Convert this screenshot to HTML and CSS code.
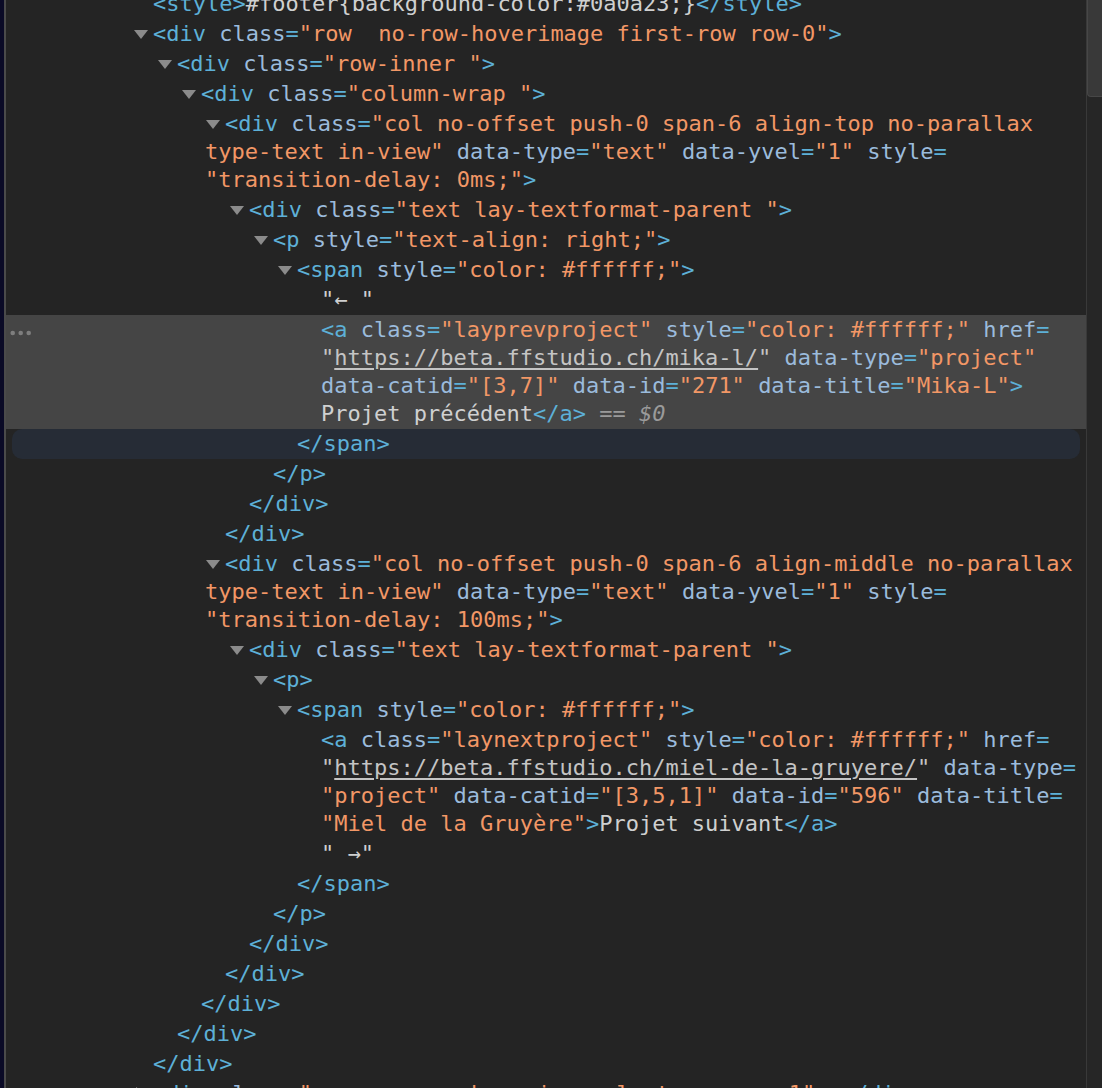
FILE: index.html
```html
<!DOCTYPE html>
<html>
<head>
<meta charset="utf-8">
<link rel="stylesheet" href="styles.css">
</head>
<body>
<div class="frame">
  <div class="edge"></div>
  <div class="panel">
    <div class="tree">
      <div class="node l0"><span class="t">&lt;style&gt;</span>#footer{background-color:#0a0a23;}<span class="t">&lt;/style&gt;</span></div>
      <div class="node d0"><svg class="tri" width="20" height="28" viewBox="0 0 20 28"><path d="M1 10 H15 L8 19 Z"/></svg><span class="t">&lt;div</span> <span class="an">class</span><span class="t">=</span><span class="av">"row  no-row-hoverimage first-row row-0"</span><span class="t">&gt;</span></div>
      <div class="node d1"><svg class="tri" width="20" height="28" viewBox="0 0 20 28"><path d="M1 10 H15 L8 19 Z"/></svg><span class="t">&lt;div</span> <span class="an">class</span><span class="t">=</span><span class="av">"row-inner "</span><span class="t">&gt;</span></div>
      <div class="node d2"><svg class="tri" width="20" height="28" viewBox="0 0 20 28"><path d="M1 10 H15 L8 19 Z"/></svg><span class="t">&lt;div</span> <span class="an">class</span><span class="t">=</span><span class="av">"column-wrap "</span><span class="t">&gt;</span></div>
      <div class="node d3"><svg class="tri" width="20" height="28" viewBox="0 0 20 28"><path d="M1 10 H15 L8 19 Z"/></svg><span class="t">&lt;div</span> <span class="an">class</span><span class="t">=</span><span class="av">"col no-offset push-0 span-6 align-top no-parallax<br>type-text in-view"</span> <span class="an">data-type</span><span class="t">=</span><span class="av">"text"</span> <span class="an">data-yvel</span><span class="t">=</span><span class="av">"1"</span> <span class="an">style</span><span class="t">=</span><br><span class="av">"transition-delay: 0ms;"</span><span class="t">&gt;</span></div>
      <div class="node d4"><svg class="tri" width="20" height="28" viewBox="0 0 20 28"><path d="M1 10 H15 L8 19 Z"/></svg><span class="t">&lt;div</span> <span class="an">class</span><span class="t">=</span><span class="av">"text lay-textformat-parent "</span><span class="t">&gt;</span></div>
      <div class="node d5"><svg class="tri" width="20" height="28" viewBox="0 0 20 28"><path d="M1 10 H15 L8 19 Z"/></svg><span class="t">&lt;p</span> <span class="an">style</span><span class="t">=</span><span class="av">"text-align: right;"</span><span class="t">&gt;</span></div>
      <div class="node d6"><svg class="tri" width="20" height="28" viewBox="0 0 20 28"><path d="M1 10 H15 L8 19 Z"/></svg><span class="t">&lt;span</span> <span class="an">style</span><span class="t">=</span><span class="av">"color: #ffffff;"</span><span class="t">&gt;</span></div>
      <div class="node l7">"← "</div>
      <div class="node l7 sel"><svg class="dots" width="24" height="6" viewBox="0 0 24 6"><circle cx="2.7" cy="3" r="2.3"/><circle cx="10.7" cy="3" r="2.3"/><circle cx="18.7" cy="3" r="2.3"/></svg><span class="t">&lt;a</span> <span class="an">class</span><span class="t">=</span><span class="av">"layprevproject"</span> <span class="an">style</span><span class="t">=</span><span class="av">"color: #ffffff;"</span> <span class="an">href</span><span class="t">=</span><br><span class="lk">"</span><span class="lk u">https://beta.ffstudio.ch/mika-l/</span><span class="lk">"</span> <span class="an">data-type</span><span class="t">=</span><span class="av">"project"</span><br><span class="an">data-catid</span><span class="t">=</span><span class="av">"[3,7]"</span> <span class="an">data-id</span><span class="t">=</span><span class="av">"271"</span> <span class="an">data-title</span><span class="t">=</span><span class="av">"Mika-L"</span><span class="t">&gt;</span><br>Projet précédent<span class="t">&lt;/a&gt;</span> <span class="dim">== <i>$0</i></span></div>
      <div class="node h6 hover"><span class="t">&lt;/span&gt;</span></div>
      <div class="node l5"><span class="t">&lt;/p&gt;</span></div>
      <div class="node l4"><span class="t">&lt;/div&gt;</span></div>
      <div class="node l3"><span class="t">&lt;/div&gt;</span></div>
      <div class="node d3"><svg class="tri" width="20" height="28" viewBox="0 0 20 28"><path d="M1 10 H15 L8 19 Z"/></svg><span class="t">&lt;div</span> <span class="an">class</span><span class="t">=</span><span class="av">"col no-offset push-0 span-6 align-middle no-parallax<br>type-text in-view"</span> <span class="an">data-type</span><span class="t">=</span><span class="av">"text"</span> <span class="an">data-yvel</span><span class="t">=</span><span class="av">"1"</span> <span class="an">style</span><span class="t">=</span><br><span class="av">"transition-delay: 100ms;"</span><span class="t">&gt;</span></div>
      <div class="node d4"><svg class="tri" width="20" height="28" viewBox="0 0 20 28"><path d="M1 10 H15 L8 19 Z"/></svg><span class="t">&lt;div</span> <span class="an">class</span><span class="t">=</span><span class="av">"text lay-textformat-parent "</span><span class="t">&gt;</span></div>
      <div class="node d5"><svg class="tri" width="20" height="28" viewBox="0 0 20 28"><path d="M1 10 H15 L8 19 Z"/></svg><span class="t">&lt;p&gt;</span></div>
      <div class="node d6"><svg class="tri" width="20" height="28" viewBox="0 0 20 28"><path d="M1 10 H15 L8 19 Z"/></svg><span class="t">&lt;span</span> <span class="an">style</span><span class="t">=</span><span class="av">"color: #ffffff;"</span><span class="t">&gt;</span></div>
      <div class="node l7"><span class="t">&lt;a</span> <span class="an">class</span><span class="t">=</span><span class="av">"laynextproject"</span> <span class="an">style</span><span class="t">=</span><span class="av">"color: #ffffff;"</span> <span class="an">href</span><span class="t">=</span><br><span class="lk">"</span><span class="lk u">https://beta.ffstudio.ch/miel-de-la-gruyere/</span><span class="lk">"</span> <span class="an">data-type</span><span class="t">=</span><br><span class="av">"project"</span> <span class="an">data-catid</span><span class="t">=</span><span class="av">"[3,5,1]"</span> <span class="an">data-id</span><span class="t">=</span><span class="av">"596"</span> <span class="an">data-title</span><span class="t">=</span><br><span class="av">"Miel de la Gruyère"</span><span class="t">&gt;</span>Projet suivant<span class="t">&lt;/a&gt;</span></div>
      <div class="node l7">" →"</div>
      <div class="node l6"><span class="t">&lt;/span&gt;</span></div>
      <div class="node l5"><span class="t">&lt;/p&gt;</span></div>
      <div class="node l4"><span class="t">&lt;/div&gt;</span></div>
      <div class="node l3"><span class="t">&lt;/div&gt;</span></div>
      <div class="node l2"><span class="t">&lt;/div&gt;</span></div>
      <div class="node l1"><span class="t">&lt;/div&gt;</span></div>
      <div class="node l0"><span class="t">&lt;/div&gt;</span></div>
      <div class="node d0"><svg class="tri" width="20" height="28" viewBox="0 0 20 28"><path d="M3 7 L13 14 L3 21 Z"/></svg><span class="t">&lt;div</span> <span class="an">class</span><span class="t">=</span><span class="av">"row  no-row-hoverimage last-row row-1"</span><span class="t">&gt;</span>…<span class="t">&lt;/div&gt;</span></div>
    </div>
  </div>
  <div class="scroll"><div class="thumb"></div></div>
</div>
</body>
</html>
```
FILE: styles.css
```css
html, body {
  margin: 0;
  padding: 0;
  height: 100%;
}
body {
  background: #242424;
  font-family: "DejaVu Sans Mono", "Liberation Mono", monospace;
  font-size: 22px;
  overflow: hidden;
}
.frame {
  display: flex;
  height: 1088px;
}
.edge {
  width: 4px;
  background: #0a0a26;
  border-right: 2px solid #4a4a4a;
}
.panel {
  flex: 1;
  background: #242424;
  overflow: hidden;
}
.tree {
  margin-top: -11px;
}
.node {
  white-space: pre;
  line-height: 28px;
  padding: 1px 0;
  color: #cfd0d0;
}
.tri {
  display: inline-block;
  vertical-align: top;
  fill: #8b8b8b;
}
.d0 { padding-left: 127px; }
.d1 { padding-left: 151px; }
.d2 { padding-left: 175px; }
.d3 { padding-left: 199px; }
.d4 { padding-left: 223px; }
.d5 { padding-left: 247px; }
.d6 { padding-left: 271px; }
.l0 { padding-left: 147px; }
.l1 { padding-left: 171px; }
.l2 { padding-left: 195px; }
.l3 { padding-left: 219px; }
.l4 { padding-left: 243px; }
.l5 { padding-left: 267px; }
.l6 { padding-left: 291px; }
.l7 { padding-left: 315px; }
.t { color: #5db0d7; }
.an { color: #9bbbdc; }
.av { color: #f29766; }
.lk { color: #c4c4c4; }
.u { text-decoration: underline; text-underline-offset: 3px; }
.dim { color: #9a9a9a; }
.dim i { font-style: italic; }
.sel {
  background: #454545;
  position: relative;
}
.dots {
  position: absolute;
  left: 4px;
  top: 15px;
  fill: #7e7e7e;
}
.hover {
  background: #262c36;
  margin: 0 6px;
  border-radius: 10px;
}
.h6 { padding-left: 285px; }
.scroll {
  width: 15px;
  border-left: 1px solid #393939;
  background: #262626;
}
.thumb {
  height: 97px;
  background: #393939;
  border-left: 1px solid #474747;
  border-bottom: 1px solid #474747;
  border-bottom-left-radius: 4px;
  box-sizing: border-box;
}
```
